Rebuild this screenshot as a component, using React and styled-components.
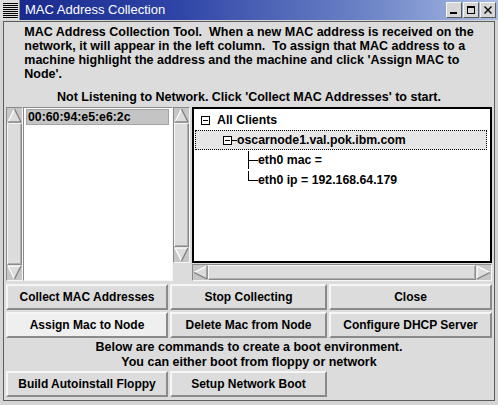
import React from 'react';
import styled, { createGlobalStyle } from 'styled-components';

const GlobalStyle = createGlobalStyle`
  html, body {
    margin: 0;
    padding: 0;
    background: #d4d4d4;
  }
  body {
    font-family: "Liberation Sans", Arial, sans-serif;
  }
`;

const LIGHT = '#f6f6f6';
const DARK = '#8a8a8a';
const BG = '#dcdcdc';

const Window = styled.div`
  width: 498px;
  height: 405px;
  background: #d4d4d4;
  display: flex;
  flex-direction: column;
  overflow: hidden;
`;

const TitleBar = styled.div`
  height: 20px;
  flex-shrink: 0;
  display: flex;
  align-items: center;
  background: linear-gradient(90deg, #17278a 0%, #2e44a6 35%, #6f86c8 75%, #a9bbe2 100%);
`;

const MenuButton = styled.div`
  width: 20px;
  height: 20px;
  box-sizing: border-box;
  background-color: #dedede;
  background-image: repeating-linear-gradient(to bottom, #000 0 1px, transparent 1px 2px);
  background-size: 15px 15px;
  background-position: 3px 3px;
  background-repeat: no-repeat;
  border-right: 1px solid #8a8a8a;
`;

const Title = styled.div`
  margin-left: 5px;
  color: #fff;
  font-size: 13px;
  line-height: 20px;
`;

const WinButtons = styled.div`
  margin-left: auto;
  margin-right: 2px;
  display: flex;
  gap: 1px;
`;

const WinButton = styled.div`
  width: 16px;
  height: 16px;
  box-sizing: border-box;
  background: #d6d6d6;
  border: 1px solid;
  border-color: ${LIGHT} #5a5a5a #5a5a5a ${LIGHT};
  display: flex;
  align-items: center;
  justify-content: center;
`;

const Frame = styled.div`
  flex: 1;
  padding: 1px 3px 4px 3px;
  display: flex;
`;

const Client = styled.div`
  flex: 1;
  border: 1px solid #5c5c5c;
  background: ${BG};
  padding: 3px 2px 0 2px;
  display: flex;
  flex-direction: column;
  color: #000;
  font-size: 12px;
  font-weight: bold;
`;

const Message = styled.div`
  display: flex;
  justify-content: center;
  font-size: 12.5px;
  line-height: 14px;
`;

const MessageText = styled.div`
  white-space: pre;
  text-align: left;
`;

const Status = styled.div`
  margin-top: 9px;
  font-size: 12.5px;
  line-height: 14px;
  text-align: center;
  white-space: pre;
`;

const Panels = styled.div`
  margin-top: 3px;
  height: 174px;
  display: flex;
`;

const Scrollbar = styled.div`
  box-sizing: border-box;
  display: flex;
  flex-direction: ${(p) => (p.$vertical ? 'column' : 'row')};
  ${(p) => (p.$vertical ? 'width: 17px;' : 'height: 17px;')}
  background: #c6c6c6;
  border: 1px solid;
  border-color: ${DARK} ${LIGHT} ${LIGHT} ${DARK};
`;

const Arrow = styled.svg`
  display: block;
  flex-shrink: 0;
  width: 15px;
  height: 15px;
`;

const Thumb = styled.div`
  flex: 1;
  box-sizing: border-box;
  background: ${BG};
  border: 1px solid;
  border-color: ${LIGHT} ${DARK} ${DARK} ${LIGHT};
  box-shadow: inset -1px -1px 0 #b0b0b0;
`;

const Listbox = styled.div`
  width: 150px;
  box-sizing: border-box;
  background: #fff;
  border: 1px solid;
  border-color: ${DARK} ${LIGHT} ${LIGHT} ${DARK};
  padding: 1px 3px 0 2px;
`;

const ListItem = styled.div`
  height: 16px;
  box-sizing: border-box;
  line-height: 14px;
  padding-left: 1px;
  font-size: 12.3px;
  background: ${(p) => (p.$selected ? '#c4c4c4' : 'transparent')};
  border: 1px solid ${(p) => (p.$selected ? '#a4a4a4' : 'transparent')};
`;

const TreePane = styled.div`
  flex: 1;
  display: grid;
  grid-template-columns: 17px 1fr;
  grid-template-rows: 1fr 17px;
  column-gap: 2px;
  row-gap: 1px;
`;

const Corner = styled.div``;

const TreeCanvas = styled.div`
  background: #fff;
  border: 2px solid #000;
  padding-top: 1px;
  overflow: hidden;
  font-size: 12.3px;
`;

const TreeRow = styled.div`
  height: 20px;
  box-sizing: border-box;
  margin: 0 3px 0 1px;
  padding-left: ${(p) => p.$indent}px;
  display: flex;
  align-items: center;
  border: 1px dotted ${(p) => (p.$selected ? '#000' : 'transparent')};
  background: ${(p) => (p.$selected ? '#e6e6e6' : 'transparent')};
  white-space: pre;
`;

const ToggleBox = styled.span`
  width: 9px;
  height: 9px;
  box-sizing: border-box;
  border: 1px solid #000;
  background: #fff;
  display: inline-flex;
  align-items: center;
  justify-content: center;
  flex-shrink: 0;
  &::after {
    content: '';
    width: 5px;
    height: 1px;
    background: #000;
  }
`;

const Dash = styled.span`
  width: ${(p) => p.$w}px;
  height: ${(p) => (p.$line ? 1 : 0)}px;
  background: #000;
  flex-shrink: 0;
`;

const Connector = styled.span`
  align-self: stretch;
  width: 10px;
  flex-shrink: 0;
  background-image: linear-gradient(#000, #000), linear-gradient(#000, #000);
  background-repeat: no-repeat;
  background-size: 1px ${(p) => (p.$last ? '50%' : '100%')}, 100% 1px;
  background-position: left top, left center;
`;

const ButtonGrid = styled.div`
  display: grid;
  grid-template-columns: 162px 157px 1fr;
  gap: 2px;
  margin-top: ${(p) => p.$top}px;
`;

const Button = styled.div`
  height: 26px;
  box-sizing: border-box;
  display: flex;
  align-items: center;
  justify-content: center;
  background: ${(p) => (p.$active ? '#efefef' : BG)};
  border: 2px solid;
  border-color: ${LIGHT} ${DARK} ${DARK} ${LIGHT};
  white-space: pre;
`;

const Note = styled.div`
  padding: 2px 0 1px;
  font-size: 12.5px;
  line-height: 15px;
  text-align: center;
`;

const arrows = {
  up: {
    fill: '7.5,1 14,14 1,14',
    light: [[1, 14, 7.5, 1]],
    dark: [[7.5, 1, 14, 14], [1, 14, 14, 14]],
  },
  down: {
    fill: '1,1 14,1 7.5,14',
    light: [[1, 1, 14, 1], [1, 1, 7.5, 14]],
    dark: [[14, 1, 7.5, 14]],
  },
  left: {
    fill: '1,7.5 14,1 14,14',
    light: [[1, 7.5, 14, 1]],
    dark: [[1, 7.5, 14, 14], [14, 1, 14, 14]],
  },
  right: {
    fill: '1,1 14,7.5 1,14',
    light: [[1, 1, 1, 14], [1, 1, 14, 7.5]],
    dark: [[1, 14, 14, 7.5]],
  },
};

const ArrowIcon = ({ dir }) => {
  const a = arrows[dir];
  return (
    <Arrow viewBox="0 0 15 15">
      <polygon points={a.fill} fill={BG} />
      {a.light.map(([x1, y1, x2, y2], i) => (
        <line key={'l' + i} x1={x1} y1={y1} x2={x2} y2={y2} stroke="#fff" strokeWidth="1.3" />
      ))}
      {a.dark.map(([x1, y1, x2, y2], i) => (
        <line key={'d' + i} x1={x1} y1={y1} x2={x2} y2={y2} stroke="#7c7c7c" strokeWidth="1.3" />
      ))}
    </Arrow>
  );
};

const VScroll = () => (
  <Scrollbar $vertical>
    <ArrowIcon dir="up" />
    <Thumb />
    <ArrowIcon dir="down" />
  </Scrollbar>
);

const HScroll = () => (
  <Scrollbar>
    <ArrowIcon dir="left" />
    <Thumb />
    <ArrowIcon dir="right" />
  </Scrollbar>
);

const message = [
  'MAC Address Collection Tool.  When a new MAC address is received on the',
  'network, it will appear in the left column.  To assign that MAC address to a',
  "machine highlight the address and the machine and click 'Assign MAC to",
  "Node'.",
];

const App = () => {
  return (
    <Window>
      <GlobalStyle />
      <TitleBar>
        <MenuButton />
        <Title>MAC Address Collection</Title>
        <WinButtons>
          <WinButton>
            <svg width="10" height="10" viewBox="0 0 10 10">
              <rect x="1" y="7" width="7" height="2" fill="#000" />
            </svg>
          </WinButton>
          <WinButton>
            <svg width="10" height="10" viewBox="0 0 10 10">
              <rect x="1.5" y="1.5" width="7" height="7" fill="none" stroke="#000" />
              <rect x="1" y="1" width="8" height="2" fill="#000" />
            </svg>
          </WinButton>
          <WinButton>
            <svg width="10" height="10" viewBox="0 0 10 10">
              <path d="M1.5 1.5 L8.5 8.5 M8.5 1.5 L1.5 8.5" stroke="#000" strokeWidth="1.4" />
            </svg>
          </WinButton>
        </WinButtons>
      </TitleBar>
      <Frame>
        <Client>
          <Message>
            <MessageText>{message.join('\n')}</MessageText>
          </Message>
          <Status>Not Listening to Network. Click 'Collect MAC Addresses' to start.</Status>
          <Panels>
            <VScroll />
            <Listbox>
              <ListItem $selected>00:60:94:e5:e6:2c</ListItem>
            </Listbox>
            <TreePane>
              <VScroll />
              <TreeCanvas>
                <TreeRow $indent={5}>
                  <ToggleBox />
                  <Dash $w={7} />
                  All Clients
                </TreeRow>
                <TreeRow $indent={27} $selected>
                  <ToggleBox />
                  <Dash $w={5} $line />
                  oscarnode1.val.pok.ibm.com
                </TreeRow>
                <TreeRow $indent={52}>
                  <Connector />
                  eth0 mac =
                </TreeRow>
                <TreeRow $indent={52}>
                  <Connector $last />
                  eth0 ip = 192.168.64.179
                </TreeRow>
              </TreeCanvas>
              <Corner />
              <HScroll />
            </TreePane>
          </Panels>
          <ButtonGrid $top={3}>
            <Button>Collect MAC Addresses</Button>
            <Button>Stop Collecting</Button>
            <Button>Close</Button>
            <Button $active>Assign Mac to Node</Button>
            <Button>Delete Mac from Node</Button>
            <Button>Configure DHCP Server</Button>
          </ButtonGrid>
          <Note>
            Below are commands to create a boot environment.
            <br />
            You can either boot from floppy or network
          </Note>
          <ButtonGrid $top={0}>
            <Button>Build Autoinstall Floppy</Button>
            <Button>Setup Network Boot</Button>
          </ButtonGrid>
        </Client>
      </Frame>
    </Window>
  );
};

export default App;
